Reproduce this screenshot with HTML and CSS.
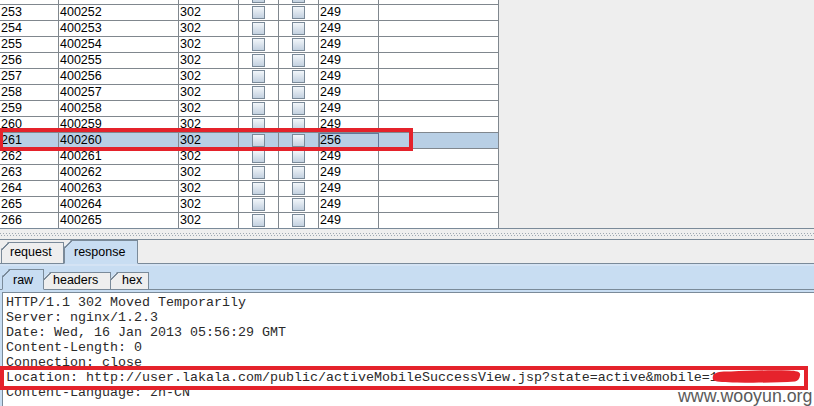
FILE: index.html
```html
<!DOCTYPE html>
<html>
<head>
<meta charset="utf-8">
<link rel="stylesheet" href="styles.css">
</head>
<body>
<div class="app">
  <div class="top">
    <div class="table-view">
      <div class="grid">
        <div class="row"><div class="cell">252</div><div class="cell">400251</div><div class="cell">302</div><div class="cell chk"><span class="box"></span></div><div class="cell chk"><span class="box"></span></div><div class="cell">249</div><div class="cell"></div></div>
        <div class="row"><div class="cell">253</div><div class="cell">400252</div><div class="cell">302</div><div class="cell chk"><span class="box"></span></div><div class="cell chk"><span class="box"></span></div><div class="cell">249</div><div class="cell"></div></div>
        <div class="row"><div class="cell">254</div><div class="cell">400253</div><div class="cell">302</div><div class="cell chk"><span class="box"></span></div><div class="cell chk"><span class="box"></span></div><div class="cell">249</div><div class="cell"></div></div>
        <div class="row"><div class="cell">255</div><div class="cell">400254</div><div class="cell">302</div><div class="cell chk"><span class="box"></span></div><div class="cell chk"><span class="box"></span></div><div class="cell">249</div><div class="cell"></div></div>
        <div class="row"><div class="cell">256</div><div class="cell">400255</div><div class="cell">302</div><div class="cell chk"><span class="box"></span></div><div class="cell chk"><span class="box"></span></div><div class="cell">249</div><div class="cell"></div></div>
        <div class="row"><div class="cell">257</div><div class="cell">400256</div><div class="cell">302</div><div class="cell chk"><span class="box"></span></div><div class="cell chk"><span class="box"></span></div><div class="cell">249</div><div class="cell"></div></div>
        <div class="row"><div class="cell">258</div><div class="cell">400257</div><div class="cell">302</div><div class="cell chk"><span class="box"></span></div><div class="cell chk"><span class="box"></span></div><div class="cell">249</div><div class="cell"></div></div>
        <div class="row"><div class="cell">259</div><div class="cell">400258</div><div class="cell">302</div><div class="cell chk"><span class="box"></span></div><div class="cell chk"><span class="box"></span></div><div class="cell">249</div><div class="cell"></div></div>
        <div class="row"><div class="cell">260</div><div class="cell">400259</div><div class="cell">302</div><div class="cell chk"><span class="box"></span></div><div class="cell chk"><span class="box"></span></div><div class="cell">249</div><div class="cell"></div></div>
        <div class="row sel"><div class="cell">261</div><div class="cell">400260</div><div class="cell">302</div><div class="cell chk"><span class="box"></span></div><div class="cell chk"><span class="box"></span></div><div class="cell focus">256</div><div class="cell"></div></div>
        <div class="row"><div class="cell">262</div><div class="cell">400261</div><div class="cell">302</div><div class="cell chk"><span class="box"></span></div><div class="cell chk"><span class="box"></span></div><div class="cell">249</div><div class="cell"></div></div>
        <div class="row"><div class="cell">263</div><div class="cell">400262</div><div class="cell">302</div><div class="cell chk"><span class="box"></span></div><div class="cell chk"><span class="box"></span></div><div class="cell">249</div><div class="cell"></div></div>
        <div class="row"><div class="cell">264</div><div class="cell">400263</div><div class="cell">302</div><div class="cell chk"><span class="box"></span></div><div class="cell chk"><span class="box"></span></div><div class="cell">249</div><div class="cell"></div></div>
        <div class="row"><div class="cell">265</div><div class="cell">400264</div><div class="cell">302</div><div class="cell chk"><span class="box"></span></div><div class="cell chk"><span class="box"></span></div><div class="cell">249</div><div class="cell"></div></div>
        <div class="row"><div class="cell">266</div><div class="cell">400265</div><div class="cell">302</div><div class="cell chk"><span class="box"></span></div><div class="cell chk"><span class="box"></span></div><div class="cell">249</div><div class="cell"></div></div>
      </div>
    </div>
    <div class="empty"></div>
  </div>
  <div class="splitter"><div class="dots"></div></div>
  <div class="tabs1">
    <div class="tab t-req">request</div>
    <div class="tab on t-resp">response</div>
  </div>
  <div class="panel">
    <div class="tabs2">
      <div class="tab on t-raw">raw</div>
      <div class="tab t-hdr">headers</div>
      <div class="tab t-hex">hex</div>
    </div>
    <div class="textarea"><pre>HTTP/1.1 302 Moved Temporarily
Server: nginx/1.2.3
Date: Wed, 16 Jan 2013 05:56:29 GMT
Content-Length: 0
Connection: close
Location: http://user.lakala.com/public/activeMobileSuccessView.jsp?state=active&amp;mobile=1
Content-Language: zh-CN</pre></div>
  </div>
  <div class="mark mark-row"></div>
  <div class="mark mark-loc"></div>
  <svg class="scribble" width="96" height="20" viewBox="0 0 96 20">
    <path d="M4 10 C5 6 12 5 22 5.5 C40 4.5 62 4 80 4.5 C88 4.8 92 6 91 9.5 C90.5 12.5 89 15 86 15.5 C70 16.5 48 17 28 16.5 C16 16.3 8 16 5 14.5 C3.5 13.5 3.5 11.5 4 10 Z" fill="#e6232c"/>
  </svg>
  <div class="watermark">www.wooyun.org</div>
</div>
</body>
</html>
```
FILE: styles.css
```css
* { box-sizing: border-box; }
html, body { margin: 0; padding: 0; }
body {
  width: 814px;
  height: 406px;
  overflow: hidden;
  background: #eeeeee;
  font-family: "Liberation Sans", Arial, sans-serif;
  font-size: 12.5px;
  color: #000;
}
.app { position: relative; width: 814px; height: 406px; overflow: hidden; }

/* results table */
.top { display: flex; height: 229px; border-bottom: 1px solid #7a8a99; }
.table-view { width: 499px; height: 228px; overflow: hidden; background: #fff; }
.grid { margin-top: -11px; }
.row {
  display: grid;
  grid-template-columns: 59px 120px 60px 40px 40px 60px 120px;
  height: 16px;
}
.row.sel { background: #b8cfe5; }
.cell {
  border-right: 1px solid #80878e;
  border-bottom: 1px solid #80878e;
  padding-left: 1px;
  line-height: 15px;
  white-space: nowrap;
  overflow: hidden;
}
.cell.focus { outline: 1px solid #62779a; outline-offset: -1px; }
.cell.chk { display: flex; align-items: center; justify-content: center; padding-left: 0; }
.box {
  width: 13px;
  height: 13px;
  border: 1px solid #7a8a99;
  background: linear-gradient(#f2f6fa, #c3d1e0);
}
.empty { flex: 1; background: #eeeeee; }

/* splitter */
.splitter { position: relative; height: 11px; border-bottom: 1px solid #7a8a99; background: #eeeeee; }
.dots {
  position: absolute;
  left: 0; right: 0; top: 4px;
  height: 3px;
  background:
    repeating-linear-gradient(90deg, #9ea8b2 0 1px, transparent 1px 3px) 0 0 / 100% 1px no-repeat,
    repeating-linear-gradient(90deg, #9ea8b2 0 1px, transparent 1px 3px) 1px 2px / 100% 1px no-repeat;
}

/* tabs */
.tabs1 {
  display: flex;
  align-items: flex-end;
  height: 24px;
  border-bottom: 1px solid #7a8a99;
  padding-left: 1px;
  background: #eeeeee;
}
.tab {
  position: relative;
  border: 1px solid #7a8a99;
  margin-bottom: -1px;
  background: #eeeeee;
  line-height: 14px;
  white-space: nowrap;
  clip-path: polygon(0 7px, 7px 0, 100% 0, 100% 100%, 0 100%);
}
.tab::before {
  content: "";
  position: absolute;
  left: -1px; top: -1px;
  width: 8px; height: 8px;
  background: linear-gradient(to bottom right, transparent 47%, #7a8a99 47%, #7a8a99 60%, transparent 60%);
}
.tab.on { background: #c8ddf2; border-bottom-color: #c8ddf2; z-index: 1; }
.t-req { width: 63px; height: 22px; padding: 2px 0 0 8px; }
.t-resp { width: 74px; height: 24px; padding: 4px 0 0 9px; }

.panel { background: #c8ddf2; box-shadow: inset 0 2px 0 #d4e3f4; height: 142px; }
.tabs2 {
  display: flex;
  align-items: flex-end;
  height: 26px;
  border-bottom: 1px solid #7a8a99;
  padding-left: 2px;
}
.t-raw { width: 42px; height: 21px; padding: 3px 0 0 10px; }
.t-hdr { width: 68px; height: 18px; padding: 0 0 0 9px; margin-left: -1px; }
.t-hex { width: 39px; height: 18px; padding: 0 0 0 11px; margin-left: -1px; }

.textarea {
  margin: 2px 0 0 2px;
  border-top: 1px solid #7a8a99;
  border-left: 1px solid #7a8a99;
  background: #fff;
  height: 120px;
  padding: 2px 0 0 3px;
}
.textarea pre {
  margin: 0;
  font-family: "Liberation Mono", "Courier New", monospace;
  font-size: 13.333px;
  line-height: 15px;
  color: #2a2a2a;
}

/* annotations */
.mark { position: absolute; border: 4px solid #e4222b; pointer-events: none; }
.mark-row { left: -1px; top: 128px; width: 414px; height: 23px; }
.mark-loc { left: 0; top: 366px; width: 808px; height: 24px; }
.scribble { position: absolute; left: 709px; top: 366px; }
.watermark {
  position: absolute;
  left: 678px;
  top: 387px;
  font-family: "Liberation Sans", Arial, sans-serif;
  font-size: 17.8px;
  line-height: 18px;
  color: #5a5a5a;
  white-space: nowrap;
}
```
